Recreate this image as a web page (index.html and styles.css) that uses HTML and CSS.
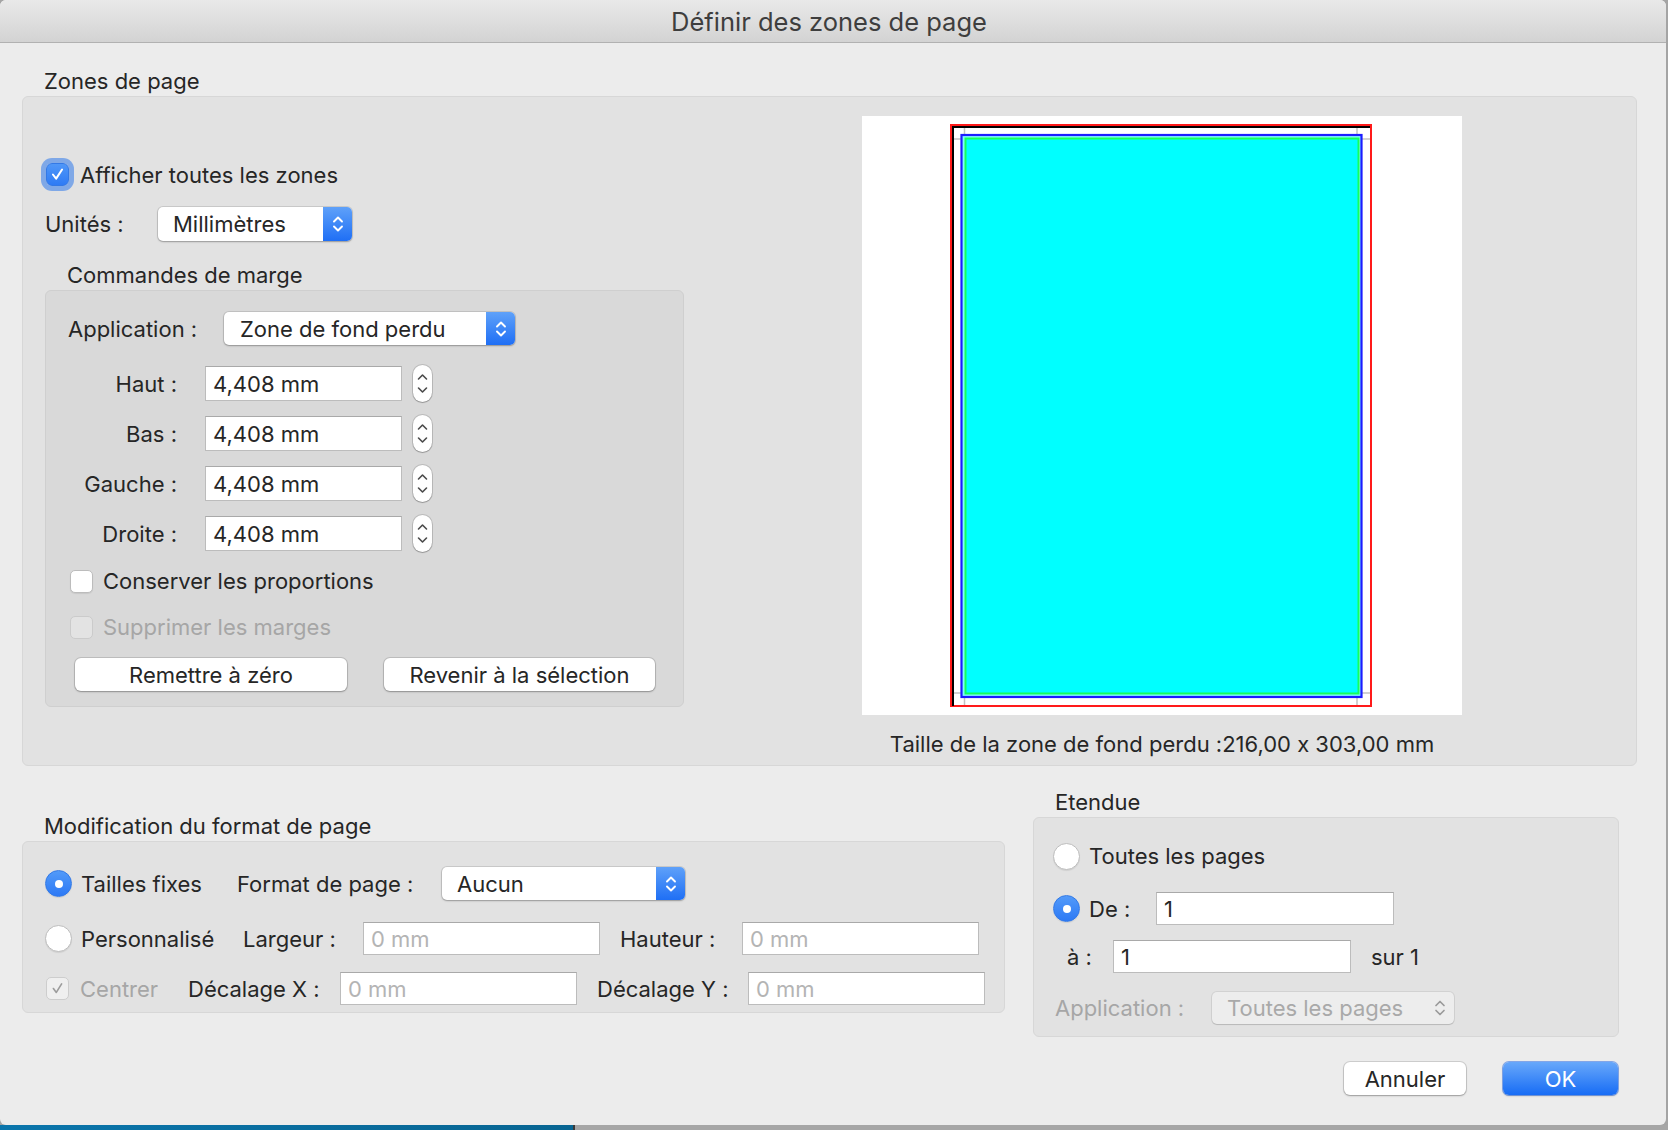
FILE: index.html
```html
<!DOCTYPE html>
<html lang="fr">
<head>
<meta charset="utf-8">
<title>Définir des zones de page</title>
<link rel="stylesheet" href="styles.css">
</head>
<body>
<div class="window">
  <div class="titlebar">Définir des zones de page</div>
  <div class="content">
    <div class="glabel first">Zones de page</div>
    <div class="box zones">
      <div class="zl">
        <div class="show-all">
          <span class="cb checked focus"><svg viewBox="0 0 23 23" width="23" height="23"><path d="M6.5 11.5 L10 16 L16.5 6" fill="none" stroke="#fff" stroke-width="2.2" stroke-linecap="round" stroke-linejoin="round"/></svg></span>
          <span class="cb-text">Afficher toutes les zones</span>
        </div>
        <div class="units-row">
          <span class="units-lbl">Unités :</span>
          <div class="popup units-pop"><span class="ptext">Millimètres</span><span class="parrows"><svg viewBox="0 0 14 24" width="14" height="24"><path d="M3 9.5 L7 5.5 L11 9.5 M3 14.5 L7 18.5 L11 14.5" fill="none" stroke="#fff" stroke-width="1.9" stroke-linecap="round" stroke-linejoin="round"/></svg></span></div>
        </div>
        <div class="glabel cmd">Commandes de marge</div>
        <div class="box dark margins">
          <div class="app-row">
            <span class="app-lbl">Application :</span>
            <div class="popup app-pop"><span class="ptext">Zone de fond perdu</span><span class="parrows"><svg viewBox="0 0 14 24" width="14" height="24"><path d="M3 9.5 L7 5.5 L11 9.5 M3 14.5 L7 18.5 L11 14.5" fill="none" stroke="#fff" stroke-width="1.9" stroke-linecap="round" stroke-linejoin="round"/></svg></span></div>
          </div>
          <div class="mrows">
            <div class="mrow"><span class="mlbl">Haut :</span><div class="field mfield">4,408 mm</div><span class="stepper"><svg viewBox="0 0 19 37" width="19" height="37"><path d="M5.5 14 L9.5 10 L13.5 14 M5.5 23 L9.5 27 L13.5 23" fill="none" stroke="#4a4a4a" stroke-width="1.6" stroke-linecap="round" stroke-linejoin="round"/></svg></span></div>
            <div class="mrow"><span class="mlbl">Bas :</span><div class="field mfield">4,408 mm</div><span class="stepper"><svg viewBox="0 0 19 37" width="19" height="37"><path d="M5.5 14 L9.5 10 L13.5 14 M5.5 23 L9.5 27 L13.5 23" fill="none" stroke="#4a4a4a" stroke-width="1.6" stroke-linecap="round" stroke-linejoin="round"/></svg></span></div>
            <div class="mrow"><span class="mlbl">Gauche :</span><div class="field mfield">4,408 mm</div><span class="stepper"><svg viewBox="0 0 19 37" width="19" height="37"><path d="M5.5 14 L9.5 10 L13.5 14 M5.5 23 L9.5 27 L13.5 23" fill="none" stroke="#4a4a4a" stroke-width="1.6" stroke-linecap="round" stroke-linejoin="round"/></svg></span></div>
            <div class="mrow"><span class="mlbl">Droite :</span><div class="field mfield">4,408 mm</div><span class="stepper"><svg viewBox="0 0 19 37" width="19" height="37"><path d="M5.5 14 L9.5 10 L13.5 14 M5.5 23 L9.5 27 L13.5 23" fill="none" stroke="#4a4a4a" stroke-width="1.6" stroke-linecap="round" stroke-linejoin="round"/></svg></span></div>
          </div>
          <div class="crow keep"><span class="cb"></span><span class="cb-text2">Conserver les proportions</span></div>
          <div class="crow suppr"><span class="cb disabled"></span><span class="cb-text2 dis">Supprimer les marges</span></div>
          <div class="btn-row">
            <div class="btn reset">Remettre à zéro</div>
            <div class="btn revert">Revenir à la sélection</div>
          </div>
        </div>
      </div>
      <div class="zr">
        <div class="preview">
          <svg viewBox="0 0 600 599" width="600" height="599">
            <rect width="600" height="599" fill="#fff"/>
            <g stroke="#c2c2c2" stroke-width="1.5">
              <line x1="102.5" y1="10" x2="102.5" y2="590"/>
              <line x1="495" y1="10" x2="495" y2="590"/>
              <line x1="90" y1="23" x2="508" y2="23"/>
              <line x1="90" y1="577" x2="508" y2="577"/>
            </g>
            <rect x="89" y="9" width="420" height="581" fill="none" stroke="#ff1a1a" stroke-width="2"/>
            <path d="M91 590 V11 H508" fill="none" stroke="#000" stroke-width="2"/>
            <rect x="99.5" y="19" width="400" height="562" fill="#80fbff" stroke="#1c1cff" stroke-width="2.2"/>
            <rect x="103.5" y="22.5" width="393" height="555" fill="#00ffff" stroke="#16ff5a" stroke-width="2"/>
          </svg>
        </div>
        <div class="caption">Taille de la zone de fond perdu :216,00 x 303,00 mm</div>
      </div>
    </div>

    <div class="bottom">
      <div class="fmt-col">
        <div class="glabel">Modification du format de page</div>
        <div class="box fmt">
          <div class="frow r1">
            <div class="fc c1"><span class="radio on"></span><span class="rtext">Tailles fixes</span></div>
            <span class="fc c2">Format de page :</span>
            <div class="popup fmt-pop"><span class="ptext">Aucun</span><span class="parrows"><svg viewBox="0 0 14 24" width="14" height="24"><path d="M3 9.5 L7 5.5 L11 9.5 M3 14.5 L7 18.5 L11 14.5" fill="none" stroke="#fff" stroke-width="1.9" stroke-linecap="round" stroke-linejoin="round"/></svg></span></div>
          </div>
          <div class="frow r2">
            <div class="fc c1b"><span class="radio"></span><span class="rtext">Personnalisé</span></div>
            <span class="fc c2b">Largeur :</span>
            <div class="field sfield ph">0 mm</div>
            <span class="fc c3b">Hauteur :</span>
            <div class="field sfield ph">0 mm</div>
          </div>
          <div class="frow r3">
            <div class="fc c1c"><span class="cb dchecked"><svg viewBox="0 0 23 23" width="23" height="23"><path d="M7 11.5 L10.2 15.8 L16 6.5" fill="none" stroke="#9c9c9c" stroke-width="1.8" stroke-linecap="round" stroke-linejoin="round"/></svg></span><span class="rtext dis">Centrer</span></div>
            <span class="fc c2c">Décalage X :</span>
            <div class="field sfield ph">0 mm</div>
            <span class="fc c3c">Décalage Y :</span>
            <div class="field sfield ph">0 mm</div>
          </div>
        </div>
      </div>

      <div class="range-col">
        <div class="glabel">Etendue</div>
        <div class="box range">
          <div class="rrow ra"><span class="radio"></span><span class="rtext">Toutes les pages</span></div>
          <div class="rrow rb"><div class="rc rc1"><span class="radio on"></span><span class="rtext">De :</span></div><div class="field rfield">1</div></div>
          <div class="rrow rcc"><span class="rc rc2">à :</span><div class="field rfield">1</div><span class="sur">sur 1</span></div>
          <div class="rrow rd"><span class="rc rc3 dis">Application :</span><div class="popup dpop"><span class="ptext">Toutes les pages</span><span class="darrows"><svg viewBox="0 0 14 24" width="14" height="24"><path d="M3 9.5 L7 5.5 L11 9.5 M3 14.5 L7 18.5 L11 14.5" fill="none" stroke="#9a9a9a" stroke-width="1.7" stroke-linecap="round" stroke-linejoin="round"/></svg></span></div></div>
        </div>
        <div class="actions">
          <div class="btn cancel">Annuler</div>
          <div class="btn ok">OK</div>
        </div>
      </div>
    </div>
  </div>
</div>
<div class="desk"><span class="desk-blue"></span><span class="desk-gray"></span></div>
</body>
</html>
```

FILE: styles.css
```css
* { box-sizing: border-box; }
html, body { margin: 0; padding: 0; }
body {
  width: 1668px;
  height: 1130px;
  overflow: hidden;
  background: #a4a4a4;
  font-family: Inter, "Noto Sans", "Liberation Sans", sans-serif;
  font-size: 22px;
  font-feature-settings: "calt" 0;
  color: #262626;
}
.window {
  width: 1666px;
  height: 1125px;
  background: #ececec;
  border-radius: 6px 6px 6px 6px;
  overflow: hidden;
}
.titlebar {
  height: 43px;
  background: linear-gradient(#e9e9e9, #d3d3d3);
  border-bottom: 1px solid #b1b1b1;
  display: flex;
  align-items: center;
  justify-content: center;
  font-size: 25.5px;
  color: #3e3e3e;
  padding-right: 8px;
}
.content { padding: 0 29px 0 22px; }

.glabel {
  height: 26px;
  line-height: 26px;
  padding-left: 22px;
  margin-bottom: 2px;
  white-space: nowrap;
}
.glabel.first { margin-top: 25px; }

.box {
  background: #e2e2e2;
  border: 1px solid #d7d7d7;
  border-radius: 6px;
}
.box.dark { background: #d9d9d9; border-color: #cfcfcf; }

/* zones group */
.zones {
  display: flex;
  align-items: flex-start;
  padding: 19px 0 8px 22px;
}
.zl { width: 639px; padding-top: 41px; }
.zr { width: 600px; margin-left: 178px; }

.show-all { height: 35px; display: flex; align-items: center; }
.cb {
  width: 23px;
  height: 23px;
  flex: none;
  border-radius: 5px;
  background: #fff;
  border: 1px solid #bcbcbc;
  box-shadow: 0 1px 1px rgba(0,0,0,0.08);
  display: inline-flex;
  align-items: center;
  justify-content: center;
}
.cb svg { display: block; }
.cb.checked {
  background: linear-gradient(#4f97f8, #2f7bf5);
  border: 1px solid #3379e6;
}
.cb.focus { margin-left: 1px; box-shadow: 0 0 0 5px #7fa8e7; border-radius: 6px; }
.cb.disabled { background: #e3e3e3; border-color: #cbcbcb; box-shadow: none; }
.cb.dchecked { background: #efefef; border-color: #cdcdcd; box-shadow: none; }
.cb-text { margin-left: 11px; white-space: nowrap; }

.units-row { margin-top: 15px; height: 34px; display: flex; align-items: center; }
.units-lbl { width: 113px; flex: none; }

.popup {
  display: flex;
  align-items: center;
  background: #fff;
  border-radius: 5px;
  box-shadow: 0 0 0 1px rgba(0,0,0,0.1), 0 1px 2px rgba(0,0,0,0.25);
  overflow: hidden;
  flex: none;
}
.popup .ptext { flex: 1; padding-left: 15px; white-space: nowrap; }
.parrows {
  width: 29px;
  align-self: stretch;
  background: linear-gradient(#5fa1f9, #1f6ff5);
  display: flex;
  align-items: center;
  justify-content: center;
}
.parrows svg, .darrows svg { display: block; }
.darrows {
  width: 29px;
  align-self: stretch;
  display: flex;
  align-items: center;
  justify-content: center;
}
.units-pop { width: 194px; height: 34px; }

.glabel.cmd { margin-top: 21px; }

.margins { width: 639px; padding: 21px 0 15px 22px; }
.app-row { height: 33px; display: flex; align-items: center; }
.app-lbl { width: 156px; flex: none; }
.app-pop { width: 291px; height: 33px; }
.app-pop .ptext { padding-left: 16px; }

.mrows { margin-top: 21px; }
.mrow { height: 35px; display: flex; align-items: center; margin-bottom: 15px; }
.mrow:last-child { margin-bottom: 0; }
.mlbl { width: 109px; text-align: right; flex: none; }

.field {
  background: #fff;
  border: 1px solid #bcbcbc;
  border-top-color: #a9a9a9;
  padding-left: 7px;
  display: flex;
  align-items: center;
  white-space: nowrap;
  flex: none;
}
.field.ph { color: #b4b4b4; }
.mfield { width: 197px; height: 35px; margin-left: 28px; }

.stepper {
  width: 19px;
  height: 37px;
  margin-left: 11px;
  border-radius: 9.5px;
  background: #fff;
  box-shadow: 0 0 0 1px rgba(0,0,0,0.14), 0 1px 1px rgba(0,0,0,0.2);
  flex: none;
}
.stepper svg { display: block; }

.crow { height: 24px; display: flex; align-items: center; }
.crow .cb { margin-left: 2px; }
.cb-text2 { margin-left: 10px; white-space: nowrap; }
.dis { color: #a6a6a6; }
.keep { margin-top: 18px; }
.suppr { margin-top: 22px; }

.btn-row { margin-top: 19px; display: flex; }
.btn {
  height: 33px;
  background: #fff;
  border-radius: 6px;
  box-shadow: 0 0 0 1px rgba(0,0,0,0.12), 0 1px 2px rgba(0,0,0,0.25);
  display: flex;
  align-items: center;
  justify-content: center;
  white-space: nowrap;
  flex: none;
}
.reset { width: 272px; margin-left: 7px; }
.revert { width: 271px; margin-left: 37px; }

.preview { width: 600px; height: 599px; background: #fff; }
.preview svg { display: block; }
.caption { margin-top: 16px; height: 26px; line-height: 26px; text-align: center; white-space: nowrap; }

/* bottom */
.bottom { display: flex; align-items: flex-start; }
.fmt-col { width: 983px; margin-top: 47px; }
.range-col { width: 586px; margin-left: 28px; margin-top: 23px; }

.fmt { height: 172px; padding: 25px 0 0 22px; }
.frow { height: 33px; display: flex; align-items: center; }
.fc { flex: none; display: flex; align-items: center; white-space: nowrap; }
.r2 { margin-top: 22px; }
.r3 { margin-top: 17px; }
.c1 { width: 192px; }
.c2 { width: 205px; }
.fmt-pop { width: 243px; height: 33px; }
.c1b { width: 198px; }
.c2b { width: 120px; }
.c3b { width: 122px; margin-left: 20px; }
.c1c { width: 143px; }
.c1c .cb { margin-left: 1px; }
.c1c .rtext { margin-left: 11px; }
.c2c { width: 152px; }
.c3c { width: 151px; margin-left: 20px; }
.sfield { width: 237px; height: 33px; }

.radio {
  width: 27px;
  height: 27px;
  border-radius: 50%;
  background: #fff;
  border: 1px solid #bdbdbd;
  box-shadow: 0 1px 1px rgba(0,0,0,0.08);
  flex: none;
  display: inline-flex;
  align-items: center;
  justify-content: center;
}
.radio.on {
  background: linear-gradient(#529af9, #2d79f5);
  border-color: #3279e6;
}
.radio.on::after {
  content: "";
  width: 8px;
  height: 8px;
  border-radius: 50%;
  background: #fff;
}
.rtext { margin-left: 9px; white-space: nowrap; }

.range { height: 220px; padding: 24px 0 0 19px; }
.rrow { display: flex; align-items: center; }
.ra { height: 28px; }
.rb { height: 33px; margin-top: 22px; }
.rcc { height: 33px; margin-top: 15px; }
.rd { height: 32px; margin-top: 19px; }
.rc { flex: none; display: flex; align-items: center; white-space: nowrap; }
.rc1 { width: 103px; }
.rc2 { width: 60px; padding-left: 14px; }
.rc3 { width: 159px; padding-left: 2px; }
.rfield { width: 238px; height: 33px; }
.sur { margin-left: 20px; }
.dpop {
  width: 242px;
  height: 32px;
  background: #ededed;
  color: #a9a9a9;
  box-shadow: 0 0 0 1px rgba(0,0,0,0.07), 0 1px 1px rgba(0,0,0,0.12);
}

.actions { display: flex; justify-content: flex-end; margin-top: 25px; padding-right: 1px; }
.cancel { width: 122px; }
.ok {
  width: 115px;
  margin-left: 37px;
  background: linear-gradient(#68a8fa, #176cf5);
  color: #fff;
  box-shadow: 0 0 0 1px rgba(30,100,230,0.5), 0 1px 2px rgba(0,0,0,0.25);
}

.desk { height: 5px; display: flex; }
.desk-blue { width: 573px; background: linear-gradient(90deg, #0a75ab, #086592); }
.desk-gray { flex: 1; background: linear-gradient(90deg, #3a3a3a 0, #3a3a3a 2px, #a6a6a6 2px, #a6a6a6 100%); }
```
